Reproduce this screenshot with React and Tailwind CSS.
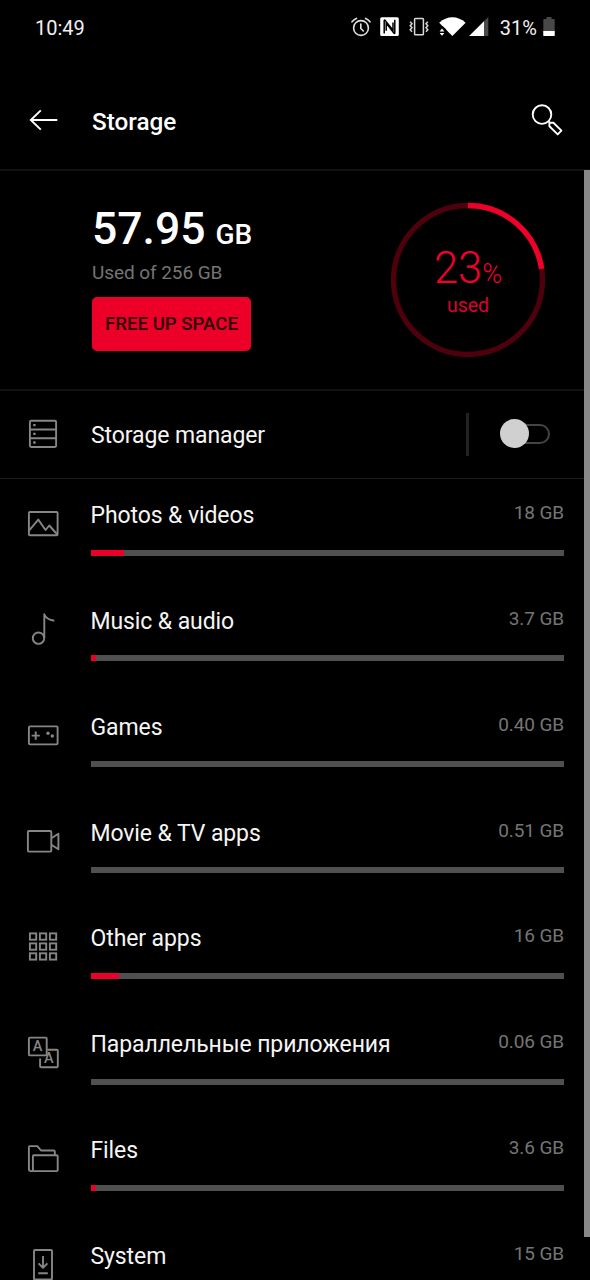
import React, { useState } from 'react';

const categories = [
  { name: 'Photos & videos', size: '18 GB', used: 7.1, icon: PhotoIcon },
  { name: 'Music & audio', size: '3.7 GB', used: 1.1, icon: MusicIcon },
  { name: 'Games', size: '0.40 GB', used: 0, icon: GamesIcon },
  { name: 'Movie & TV apps', size: '0.51 GB', used: 0, icon: MovieIcon },
  { name: 'Other apps', size: '16 GB', used: 6.1, icon: AppsIcon },
  { name: 'Параллельные приложения', size: '0.06 GB', used: 0, icon: ParallelIcon },
  { name: 'Files', size: '3.6 GB', used: 1.1, icon: FilesIcon },
  { name: 'System', size: '15 GB', used: 6, icon: SystemIcon },
];

function Icon({ children }) {
  return (
    <svg viewBox="0 0 40 40" className="w-10 h-10 shrink-0 text-[#868686]" fill="none" stroke="currentColor" strokeWidth="1.9" strokeLinejoin="round">
      {children}
    </svg>
  );
}

function ManagerIcon() {
  return (
    <Icon>
      <rect x="6.9" y="6.8" width="26.2" height="26.2" rx="1.2" />
      <path d="M7 15.5H33M7 24.2H33" />
      <path d="M10.2 11.2h2.4M10.2 19.9h2.4M10.2 28.5h2.4" strokeWidth="2.3" />
    </Icon>
  );
}

function PhotoIcon() {
  return (
    <Icon>
      <rect x="5.9" y="8" width="28.7" height="23.2" rx="1" />
      <path d="M6 26.7L15.3 15.6L22.5 26L26.3 21.5L34.3 30.5" />
    </Icon>
  );
}

function MusicIcon() {
  return (
    <Icon>
      <circle cx="15.5" cy="28.2" r="5.7" />
      <path d="M21.3 28V4.2C22.3 7.5 26 9.8 31.3 10.8" />
    </Icon>
  );
}

function GamesIcon() {
  return (
    <Icon>
      <rect x="5.9" y="10.4" width="28.7" height="18" rx="1.2" />
      <path d="M8.6 19.6h8.2M12.7 15.5v8.2" />
      <circle cx="25" cy="17.3" r="1.7" fill="currentColor" stroke="none" />
      <circle cx="29.3" cy="20" r="1.7" fill="currentColor" stroke="none" />
    </Icon>
  );
}

function MovieIcon() {
  return (
    <Icon>
      <rect x="4.9" y="9" width="23.4" height="20.6" rx="1" />
      <path d="M28.3 16.2L35.4 11.8V27.2L28.3 22.8" />
    </Icon>
  );
}

function AppsIcon() {
  return (
    <Icon>
      {[6.4, 16.4, 26.3].map((y) =>
        [6.9, 16.9, 26.9].map((x) => <rect key={`${x}-${y}`} x={x} y={y} width="6.3" height="6.3" strokeLinejoin="miter" />)
      )}
    </Icon>
  );
}

function ParallelIcon() {
  return (
    <Icon>
      <rect x="5.9" y="4.6" width="17.8" height="17.8" rx="1" />
      <path d="M24.3 16.8H33.8Q34.8 16.8 34.8 17.8V33.2Q34.8 34.2 33.8 34.2H18.1Q17.1 34.2 17.1 33.2V25.5" />
      <g fill="currentColor" stroke="none" fontFamily="Roboto, sans-serif" fontSize="14.5" fontWeight="500" textAnchor="middle">
        <text x="14.6" y="18.4">A</text>
        <text x="25.8" y="30.4">A</text>
      </g>
    </Icon>
  );
}

function FilesIcon() {
  return (
    <Icon>
      <path d="M10 32.1H7.9Q5.9 32.1 5.9 30.1V8.1Q5.9 7.1 6.9 7.1H14.3L18 11.5H30.8Q31.8 11.5 31.8 12.5V16" />
      <rect x="9.9" y="16.2" width="24.8" height="15.9" rx="1" />
    </Icon>
  );
}

function SystemIcon() {
  return (
    <Icon>
      <rect x="11" y="5" width="18" height="29.5" rx="1" />
      <path d="M20 11V22.5M15.6 18.4L20 22.8L24.4 18.4M15.3 28.2H24.8" />
    </Icon>
  );
}

function StatusBar() {
  return (
    <div className="flex items-center h-[54px] pl-[35px] pr-[35px] text-[#f0f0f0]">
      <span className="text-[20px] leading-6 pt-px">10:49</span>
      <svg viewBox="0 0 20 20" className="w-5 h-5 ml-auto mr-[9px]" fill="none" stroke="#e0e0e0" strokeWidth="1.6" strokeLinecap="round">
        <circle cx="10" cy="11" r="7.4" />
        <path d="M9.8 7V11.5L12.3 14" />
        <path d="M1 4.8Q2.8 2.4 5.4 1.4M14.6 1.4Q17.2 2.4 19 4.8" />
      </svg>
      {/* nfc */}
      <svg viewBox="0 0 19 20" className="w-[19px] h-5 mr-[10px]" fill="none">
        <rect x="0.2" y="0.3" width="18.6" height="18.6" rx="1.5" fill="#fff" />
        <path d="M4.2 16.5V4Q4.2 2.4 5.2 3.4L13 13.2V5.6M14.8 2.8V15.4Q14.8 17 13.8 16L6.2 6V13.8" stroke="#000" strokeWidth="1.5" />
      </svg>
      {/* vibrate */}
      <svg viewBox="0 0 20 20" className="w-5 h-5 mr-[10px]" fill="none" stroke="#d8d8d8" strokeWidth="1.5">
        <rect x="5.6" y="1.4" width="8.8" height="16.4" rx="0.8" />
        <path d="M1.2 4.8L3 6.8L1.2 8.8L3 10.8L1.2 12.8L3 14.8M18.8 4.8L17 6.8L18.8 8.8L17 10.8L18.8 12.8L17 14.8" />
      </svg>
      <svg viewBox="0 0 27 20" className="w-[27px] h-5 mr-[3px]" fill="#fff">
        <path d="M0.2 5.8Q6.2 0.3 13.4 0.3Q20.6 0.3 26.6 5.8L13.4 19Z" />
        <path d="M-1 9.2H3.8L7.2 12.6V20H-1Z" fill="#000" />
        <path d="M0.6 14.4L3 11.6L5.4 14.4ZM0.6 16L3 18.8L5.4 16Z" />
      </svg>
      <svg viewBox="0 0 20 20" className="w-5 h-5 mr-[11px]">
        <path d="M0.2 19L19.3 0V19Z" fill="#4a4a4a" />
        <path d="M0.2 19L15 4.3V19Z" fill="#fff" />
      </svg>
      <span className="text-[20px] leading-6 pt-px">31%</span>
      <svg viewBox="0 0 12 20" className="w-3 h-5 ml-[6px]">
        <path d="M3.5 0H8.5V2H11Q11.7 2 11.7 2.7V19H0.3V2.7Q0.3 2 1 2H3.5Z" fill="#484848" />
        <path d="M0.3 14H11.7V18.3Q11.7 19 11 19H1Q0.3 19 0.3 18.3Z" fill="#fff" />
      </svg>
    </div>
  );
}

function Header() {
  return (
    <header className="flex items-center h-[117px] pt-4 pl-7 pr-6 border-b-2 border-[#111]">
      <button className="w-8">
        <svg viewBox="0 0 32 24" className="w-8 h-6" fill="none" stroke="#fff" strokeWidth="1.9">
          <path d="M29.3 12H2.8M12.8 2.4L2.8 12L12.8 21.6" />
        </svg>
      </button>
      <h1 className="ml-8 pt-[4px] text-[24.3px] leading-8 font-medium text-white">Storage</h1>
      <button className="ml-auto">
        <svg viewBox="0 0 36 36" className="w-9 h-9" fill="none" stroke="#fff" strokeWidth="1.9" strokeLinejoin="round">
          <circle cx="12" cy="12.6" r="9.3" />
          <path d="M18.6 19.4L19.6 20.4M19.4 20.5L23.4 20.7L31.4 28.6L27.7 32.4L19.4 24.3Z" />
        </svg>
      </button>
    </header>
  );
}

function UsageRing({ percent }) {
  return (
    <div className="relative w-40 h-40">
      <svg viewBox="0 0 160 160" className="w-40 h-40 -rotate-90" fill="none" strokeWidth="5.4">
        <circle cx="80" cy="80" r="74.5" stroke="#4e000d" />
        <circle cx="80" cy="80" r="74.5" stroke="#ee0028" pathLength="100" strokeDasharray={`${percent - 0.4} 100`} />
      </svg>
      <div className="absolute inset-0 flex flex-col items-center pt-[46px] text-[#f0002d]">
        <div className="leading-[46px] text-[43.5px] font-light">
          23<span className="text-[27px]">%</span>
        </div>
        <div className="text-[19.5px] leading-6 -mt-[3px] text-[#dc0030]">used</div>
      </div>
    </div>
  );
}

function Summary() {
  return (
    <section className="flex h-[220px] pl-[92px] pr-[42px] border-b-2 border-[#111]">
      <div className="pt-8">
        <div className="text-[44.5px] leading-[52px] font-medium text-white whitespace-nowrap">
          57.95<span className="ml-[10px] text-[28px]">GB</span>
        </div>
        <div className="text-[19px] leading-6 tracking-[-0.07px] text-[#757575]">Used of 256 GB</div>
        <button className="block mt-[12px] w-[159px] h-[54px] pt-px rounded-[5px] bg-[#ed0028] text-[18.6px] font-medium text-[#2b0007] whitespace-nowrap">
          FREE UP SPACE
        </button>
      </div>
      <div className="ml-auto pt-[29px]">
        <UsageRing percent={23} />
      </div>
    </section>
  );
}

function StorageManager() {
  const [enabled, setEnabled] = useState(false);

  return (
    <section className="flex items-center h-[88px] pl-[23px] pr-10 pb-px border-b border-[#1a1a1a]">
      <ManagerIcon />
      <span className="ml-7 pt-[3px] text-[23px] leading-8 tracking-[-0.1px] text-[#f5f5f5]">Storage manager</span>
      <div className="ml-auto w-[3px] h-[43px] bg-[#222]" />
      <button onClick={() => setEnabled(!enabled)} className="relative ml-[31px] w-[50px] h-[30px]">
        <span className="absolute right-0 top-[5px] w-10 h-5 rounded-full border-[2.5px] border-[#444]" />
        <span className={`absolute top-0 w-[29px] h-[29px] rounded-full bg-[#d0d0d0] ${enabled ? 'right-0' : 'left-0'}`} />
      </button>
    </section>
  );
}

function CategoryRow({ name, size, used, icon: RowIcon }) {
  return (
    <li className="flex h-[105.85px] pl-[23px] pr-[26px] pt-[20px]">
      <div className="pt-[5px]">
        <RowIcon />
      </div>
      <div className="flex-1 ml-[27.5px]">
        <div className="flex justify-between pt-px">
          <span className="text-[23px] leading-8 tracking-[-0.1px] text-[#f5f5f5]">{name}</span>
          <span className="text-[19px] leading-[26px] tracking-[-0.1px] text-[#757575]">{size}</span>
        </div>
        <div className="mt-[17.5px] h-[6px] bg-[#505050]">
          <div className="h-full bg-[#ed0028]" style={{ width: `${used}%` }} />
        </div>
      </div>
    </li>
  );
}

export default function App() {
  return (
    <div className="relative w-full h-[1280px] overflow-hidden bg-black font-[Roboto,sans-serif]">
      <StatusBar />
      <Header />
      <Summary />
      <StorageManager />
      <ul>
        {categories.map((category) => (
          <CategoryRow key={category.name} {...category} />
        ))}
      </ul>
      {/* scrollbar */}
      <div className="absolute right-0 top-[170px] w-[6px] h-[1067px] bg-[#888]" />
    </div>
  );
}
